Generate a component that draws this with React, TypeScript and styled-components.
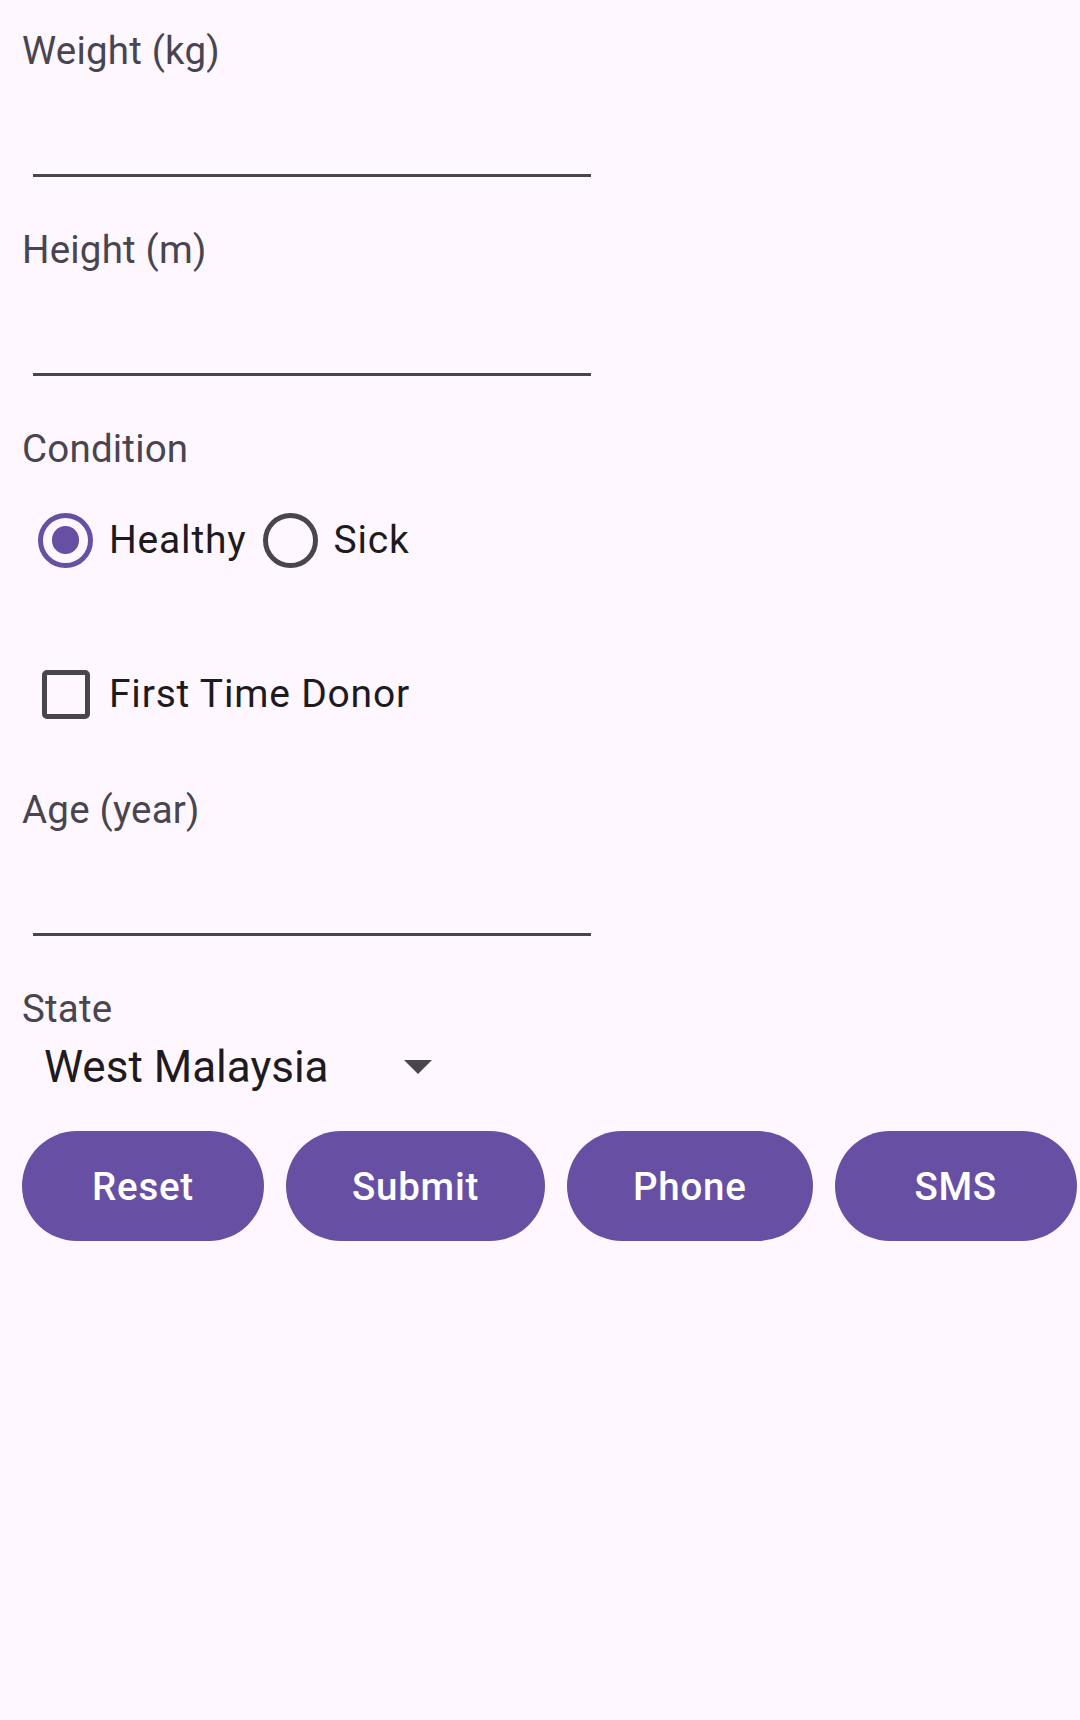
import React, { useState } from 'react';
import styled, { createGlobalStyle } from 'styled-components';

const GlobalStyle = createGlobalStyle`
  html, body {
    margin: 0;
    padding: 0;
    background: #fef7ff;
    overflow: hidden;
  }
  body {
    font-family: Roboto, 'Noto Sans', 'Liberation Sans', sans-serif;
  }
`;

const Page = styled.div`
  display: flex;
  flex-direction: column;
  align-items: flex-start;
  min-height: 1720px;
  box-sizing: border-box;
  padding: 28px 0 0 22px;
  background: #fef7ff;
`;

const Label = styled.div<{ $top?: number }>`
  margin-top: ${p => p.$top ?? 0}px;
  font-size: 38.5px;
  line-height: 45px;
  letter-spacing: 0.2px;
  color: #49454f;
`;

const Input = styled.input`
  display: block;
  box-sizing: content-box;
  width: 558px;
  height: 101px;
  margin: 0 0 50px 11px;
  padding: 0;
  border: none;
  border-bottom: 3px solid #49454f;
  background: transparent;
  outline: none;
  font-family: inherit;
  font-size: 44px;
  color: #1d1b20;
`;

const OptionRow = styled.div<{ $top?: number }>`
  display: flex;
  align-items: center;
  height: 132px;
  margin-top: ${p => p.$top ?? 0}px;
`;

const Option = styled.label`
  display: flex;
  align-items: center;
  cursor: pointer;
  font-size: 39px;
  line-height: 45px;
  letter-spacing: 0.8px;
  color: #1d1b20;
`;

const IconSlot = styled.span`
  display: flex;
  align-items: center;
  justify-content: center;
  width: 87px;
  height: 132px;
`;

const RadioCircle = styled.span<{ $on: boolean }>`
  display: flex;
  align-items: center;
  justify-content: center;
  box-sizing: border-box;
  width: 55px;
  height: 55px;
  border-radius: 50%;
  border: 5.5px solid ${p => (p.$on ? '#6750a4' : '#49454f')};

  &::after {
    content: '';
    width: 27.5px;
    height: 27.5px;
    border-radius: 50%;
    background: ${p => (p.$on ? '#6750a4' : 'transparent')};
  }
`;

const CheckSquare = styled.span<{ $on: boolean }>`
  display: flex;
  align-items: center;
  justify-content: center;
  box-sizing: border-box;
  width: 48px;
  height: 49px;
  border-radius: 5px;
  border: 5.5px solid ${p => (p.$on ? '#6750a4' : '#49454f')};
  background: ${p => (p.$on ? '#6750a4' : 'transparent')};
  color: #fff;
`;

const Spinner = styled.div`
  display: flex;
  align-items: center;
  justify-content: space-between;
  box-sizing: border-box;
  width: 430px;
  height: 68px;
  margin-top: 2px;
  padding: 0 20px 0 22px;
  font-size: 44px;
  line-height: 52px;
  color: #1d1b20;
`;

const ButtonRow = styled.div`
  display: flex;
  gap: 22px;
  margin-top: 30px;
`;

const PillButton = styled.button`
  flex-shrink: 0;
  height: 110px;
  min-width: 242px;
  padding: 0 66px;
  border: none;
  border-radius: 55px;
  background: #6750a4;
  color: #ffffff;
  font-family: inherit;
  font-size: 38.5px;
  font-weight: 500;
  letter-spacing: 0.75px;
  cursor: pointer;
`;

const conditions = ['Healthy', 'Sick'];
const actions = ['Reset', 'Submit', 'Phone', 'SMS'];

const App: React.FC = () => {
    const [condition, setCondition] = useState('Healthy');
    const [firstTime, setFirstTime] = useState(false);

    return (
        <>
            <GlobalStyle />
            <Page>
                <Label>Weight (kg)</Label>
                <Input type="text" />

                <Label>Height (m)</Label>
                <Input type="text" />

                <Label>Condition</Label>
                <OptionRow $top={3}>
                    {conditions.map(c => (
                        <Option key={c} onClick={() => setCondition(c)}>
                            <IconSlot><RadioCircle $on={condition === c} /></IconSlot>
                            {c}
                        </Option>
                    ))}
                </OptionRow>

                <OptionRow $top={22}>
                    <Option onClick={() => setFirstTime(v => !v)}>
                        <IconSlot>
                            <CheckSquare $on={firstTime}>
                                {firstTime && (
                                    <svg width="30" height="30" viewBox="0 0 24 24" fill="none" stroke="currentColor" strokeWidth="3">
                                        <path d="M4 12l5 5L20 6" />
                                    </svg>
                                )}
                            </CheckSquare>
                        </IconSlot>
                        First Time Donor
                    </Option>
                </OptionRow>

                <Label $top={27}>Age (year)</Label>
                <Input type="text" />

                <Label>State</Label>
                <Spinner>
                    <span>West Malaysia</span>
                    <svg width="28" height="14" viewBox="0 0 28 14">
                        <path d="M0 0h28L14 14z" fill="#49454f" />
                    </svg>
                </Spinner>

                <ButtonRow>
                    {actions.map(a => (
                        <PillButton key={a}>{a}</PillButton>
                    ))}
                </ButtonRow>
            </Page>
        </>
    );
};

export default App;
